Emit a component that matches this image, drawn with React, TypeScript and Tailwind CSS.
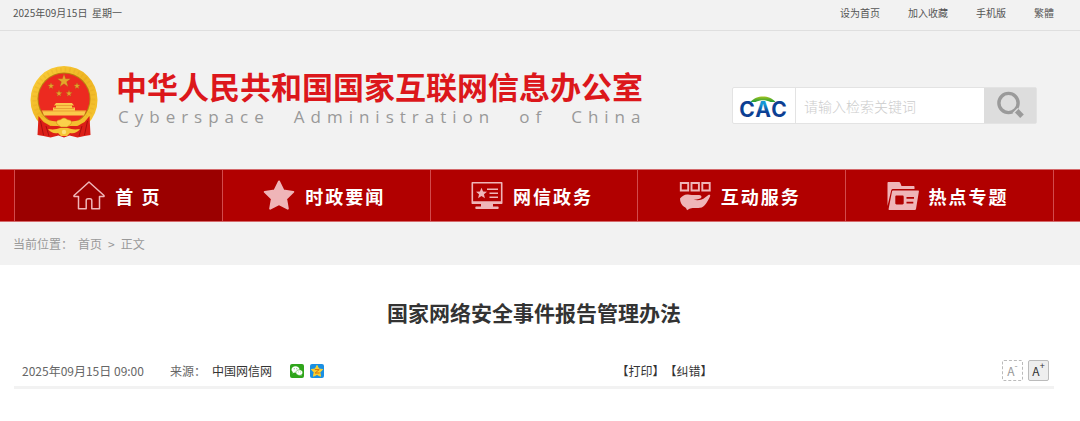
import type { ReactNode } from 'react';

function star(cx: number, cy: number, r: number, inner = 0.4) {
  return Array.from({ length: 10 }, (_, i) => {
    const radius = i % 2 ? r * inner : r;
    const angle = (Math.PI / 5) * i - Math.PI / 2;
    return `${cx + radius * Math.cos(angle)},${cy + radius * Math.sin(angle)}`;
  }).join(' ');
}

function Emblem() {
  return (
    <svg viewBox="0 0 68 73" className="mb-0.5 h-[73px] w-[68px] shrink-0" aria-hidden="true">
      <defs>
        <linearGradient id="gold" x1="0" y1="0" x2="1" y2="1">
          <stop offset="0" stopColor="#fbd23c" />
          <stop offset="0.5" stopColor="#efb524" />
          <stop offset="1" stopColor="#f7c832" />
        </linearGradient>
      </defs>
      <ellipse cx="34" cy="35" rx="33.5" ry="34" fill="url(#gold)" />
      <circle
        cx="34"
        cy="34"
        r="29.5"
        fill="none"
        stroke="#d9981a"
        strokeWidth="4"
        strokeDasharray="1.5 3"
        opacity="0.2"
      />
      <circle cx="34" cy="34" r="26.5" fill="#b98210" />
      <circle cx="34" cy="34" r="25.5" fill="#ec2a20" />
      <g fill="#e5a52a" stroke="#a8541a" strokeWidth="0.3">
        <polygon points={star(34, 16, 7)} />
        <polygon points={star(21, 21, 3.5)} />
        <polygon points={star(47, 21, 3.5)} />
        <polygon points={star(29, 28.5, 3.5)} />
        <polygon points={star(39, 28.5, 3.5)} />
      </g>
      <path
        d="M26 38h16l2 2.5H24zM26 40.5h16V43H26zM23 42.5h22v3H23zM12 45.5h44l-2 5H14z"
        fill="#fbc94a"
      />
      <path d="M25 40.5h18M24 43.5h20M13 46h42" stroke="#d9781f" strokeWidth="0.5" />
      <path d="M8.5 51l5 6 7 4h27l7-4 5-6 1 19-6 1-7 1.5-8-2-5.5 2-5.5-2-8 2-7-1.5-6-1z" fill="#dc1f17" />
      <path d="M10.5 56l3 14M57.5 56l-3 14M16 61l3 10M52 61l-3 10" stroke="#a80f0f" strokeWidth="1" />
      <path d="M9 50c6 5 14 7 25 7s19-2 25-7c-4 8-12 11.5-25 11.5S13 58 9 50z" fill="#f3bd30" />
      <path
        d="M34 53c2 0 3 2 5 2s3 2 2 4l-4 3h-6l-4-3c-1-2 0-4 2-4s3-2 5-2z"
        fill="#fbd04a"
        stroke="#cf8d14"
        strokeWidth="0.6"
      />
      <path
        d="M18 64c6 1 9 0 12-1h8c3 1 6 2 12 1-2 3-6 5-10 4l-3 3h-6l-3-3c-4 1-8-1-10-4z"
        fill="#f6c436"
      />
      <circle cx="34" cy="67" r="2.2" fill="#fde07a" />
    </svg>
  );
}

function CacLogo() {
  return (
    <svg viewBox="0 0 50 35" className="h-[35px] w-[50px]" role="img" aria-label="CAC">
      <defs>
        <linearGradient id="arc" x1="0" y1="0" x2="0" y2="1">
          <stop offset="0" stopColor="#a6c41f" />
          <stop offset="1" stopColor="#1d9b38" />
        </linearGradient>
        <linearGradient id="letter" x1="0" y1="0" x2="0" y2="1">
          <stop offset="0.3" stopColor="#1497d5" />
          <stop offset="0.6" stopColor="#0c3f93" />
        </linearGradient>
      </defs>
      <path d="M11.5 14C15 10 19 8.500 24 8.500s9 1.500 12.500 5.500h-5c-5-2.500-10-2.500-15 0z" fill="url(#arc)" />
      <g fontFamily="Inter, 'Liberation Sans', sans-serif" fontSize="21" fontWeight="700" textAnchor="middle">
        <text x="8" y="29" fill="#0c3f93">C</text>
        <text x="24" y="29" fill="url(#letter)">A</text>
        <text x="40" y="29" fill="#0c3f93">C</text>
      </g>
    </svg>
  );
}

function SearchIcon() {
  return (
    <svg viewBox="0 0 28 28" className="size-7" fill="none" stroke="#9a9a9a" aria-hidden="true">
      <circle cx="12.5" cy="12" r="9.6" strokeWidth="3.4" />
      <path d="M20.5 19.5l5.5 5.7" strokeWidth="5" />
      <path d="M17 22.5l5-5" stroke="#ddd" strokeWidth="1.5" />
    </svg>
  );
}

function NavIcon({ children }: { children: ReactNode }) {
  return (
    <svg viewBox="0 0 32 32" className="mb-0.5 size-8 shrink-0" fill="#efb5b8" aria-hidden="true">
      {children}
    </svg>
  );
}

const navItems = [
  {
    label: '首 页',
    active: true,
    icon: (
      <path
        d="M16 3L1 16.5v1h4.500v12.200h7.700v-8c0-1.300.6-1.900 1.800-1.900h2c1.200 0 1.800.6 1.800 1.900v8h7.700V17.500H31v-1z"
        fill="none"
        stroke="#efb5b8"
        strokeWidth="1.5"
        strokeLinejoin="round"
      />
    ),
  },
  {
    label: '时政要闻',
    icon: (
      <polygon
        points={star(16, 17.5, 15, 0.5)}
        stroke="#efb5b8"
        strokeWidth="2"
        strokeLinejoin="round"
      />
    ),
  },
  {
    label: '网信政务',
    icon: (
      <>
        <path
          fillRule="evenodd"
          d="M1.5 3h29c.6 0 1 .4 1 1v20c0 .6-.4 1-1 1H22v2.5h4.500c.8 0 1.200.4 1.200 1.200s-.4 1.300-1.200 1.300h-21c-.8 0-1.200-.5-1.200-1.300s.4-1.200 1.200-1.200H10V25H1.500c-.6 0-1-.4-1-1V4c0-.6.4-1 1-1zm.6 1.600v17.700h27.800V4.600z"
        />
        <polygon points={star(10.5, 14.5, 5.8, 0.45)} />
        <path d="M16 10.2h11M18.5 14.2H27M18.5 18.2H27" stroke="#efb5b8" strokeWidth="1.6" />
      </>
    ),
  },
  {
    label: '互动服务',
    icon: (
      <>
        <path
          d="M1.800 4h7.400v7.500H1.800zM12.500 4h7.400v7.500h-7.400zM23.300 4h7.400v7.500h-7.400z"
          fill="none"
          stroke="#efb5b8"
          strokeWidth="1.9"
        />
        <path d="M1 19.500c2-2.500 5-4.500 8-4 3 .6 7 .5 11 .5 2.200 0 3 1.600 2.200 2.800-.9 1.200-3.200 1.500-7.700 2 4.500 1 9.200.2 11.200-2L29 16.200c1.500-1 2.800-.4 2 1.200-2.500 5-5 10.600-10 11.400-3.500.7-8-.5-10.500 1L8 31.200c-.5-2-1.500-2.700-3-3.500-2.500-1.500-4-4.700-4-8.200z" />
      </>
    ),
  },
  {
    label: '热点专题',
    icon: (
      <>
        <path d="M.5 27V4c0-.6.4-1 1-1H12c.6 0 1 .3 1.200.8L14.500 7H26.500c.6 0 1 .4 1 1v2H6.200c-1.200 0-1.800.5-2 1.500z" />
        <path
          fillRule="evenodd"
          d="M6 11.500h25c.7 0 1 .4.900 1l-2.900 17.500c-.1.600-.5 1-1.200 1H2.500c-.7 0-1-.4-.9-1L5 12.500c.1-.6.4-1 1-1zm3.500 5c-.7 0-1.200.5-1.200 1.200v6.600c0 .7.5 1.200 1.200 1.200h6c.7 0 1.200-.5 1.200-1.200v-6.600c0-.7-.5-1.200-1.200-1.200zM19.500 18v1.800H27V18zM19.500 22.800v1.800h6.800v-1.800z"
        />
      </>
    ),
  },
];

function WechatIcon() {
  return (
    <svg viewBox="0 0 14 14" className="size-3.5" aria-hidden="true">
      <rect width="14" height="14" rx="2" fill="#2fa51b" />
      <path d="M5.5 2.300C3.300 2.300 1.500 3.700 1.500 5.600c0 1 .5 1.900 1.400 2.500l-.4 1.300 1.600-.8c.5.1.9.2 1.400.2 2.200 0 4-1.400 4-3.200S7.700 2.300 5.500 2.300z" fill="#fff" />
      <path
        d="M9.300 5.800c-1.900 0-3.400 1.200-3.400 2.800s1.500 2.800 3.400 2.800l1.200-.2 1.400.7-.4-1.100c.8-.5 1.200-1.300 1.200-2.200 0-1.600-1.500-2.800-3.400-2.800z"
        fill="#fff"
        stroke="#2fa51b"
        strokeWidth="0.5"
      />
      <g fill="#2fa51b">
        <circle cx="4.2" cy="4.8" r="0.5" />
        <circle cx="6.8" cy="4.8" r="0.5" />
        <circle cx="8.2" cy="7.9" r="0.4" />
        <circle cx="10.4" cy="7.9" r="0.4" />
      </g>
    </svg>
  );
}

function QzoneIcon() {
  return (
    <svg viewBox="0 0 14 14" className="size-3.5" aria-hidden="true">
      <rect width="14" height="14" rx="2" fill="#1a8fe3" />
      <polygon points={star(7, 7.4, 6, 0.5)} fill="#fdd02c" stroke="#fdd02c" strokeWidth="1" strokeLinejoin="round" />
      <path d="M4.8 5.6h4.400L5.200 9h4.400" fill="none" stroke="#d5710c" strokeWidth="1" />
    </svg>
  );
}

export default function App() {
  return (
    <div className="bg-white font-['Noto_Sans_CJK_SC','Noto_Sans',sans-serif] text-xs text-[#333]">
      <div className="flex h-[31px] items-center justify-between border-b border-[#dfdfdf] bg-[#f2f2f2] pr-6.5 pb-1 pl-[13px] text-[10px] text-[#555]">
        <span>2025年09月15日&nbsp; 星期一</span>
        <nav className="flex gap-7">
          <a href="#home">设为首页</a>
          <a href="#favorite">加入收藏</a>
          <a href="#mobile">手机版</a>
          <a href="#traditional">繁體</a>
        </nav>
      </div>

      <header className="flex h-[138px] items-center justify-between bg-[#f2f2f2] pr-[43px] pl-[30px]">
        <div className="flex items-center gap-[18px] pt-1">
          <Emblem />
          <div className="pb-2 whitespace-nowrap">
            <h1 className="text-[31px] leading-[38px] font-bold text-[#dc171b]">
              中华人民共和国国家互联网信息办公室
            </h1>
            <p className="flex gap-6 pl-0.5 font-['Open_Sans','Noto_Sans',sans-serif] text-[17px] leading-6 tracking-[6px] text-[#999]">
              <span>Cyberspace</span>
              <span>Administration</span>
              <span>of</span>
              <span>China</span>
            </p>
          </div>
        </div>
        <form className="mt-2.5 flex h-[37px] w-[305px] rounded-xs border border-[#e3e3e3] bg-white">
          <div className="flex w-[63px] items-center border-r border-[#e3e3e3] pl-1.5">
            <CacLogo />
          </div>
          <input
            type="text"
            aria-label="检索关键词"
            placeholder="请输入检索关键词"
            className="min-w-0 flex-1 px-2 pt-0.5 text-sm font-light outline-none placeholder:text-[#ccc]"
          />
          <button type="submit" aria-label="搜索" className="flex w-[52px] items-center justify-center bg-[#ddd]">
            <SearchIcon />
          </button>
        </form>
      </header>

      <nav className="border-y border-[#d4696b] bg-[#b10000] pr-6.5 pl-3.5">
        <div className="grid h-[51px] grid-cols-5 border-l border-[#d24a4c]">
          {navItems.map((item) => (
            <a
              key={item.label}
              href="#channel"
              className={`flex items-center justify-center gap-2.5 border-r border-[#d24a4c] text-lg font-bold tracking-[2px] text-white ${
                item.active ? 'bg-[#9b0000] pr-0.5' : 'pr-1'
              }`}
            >
              <NavIcon>{item.icon}</NavIcon>
              {item.label}
            </a>
          ))}
        </div>
      </nav>

      <div className="flex h-[43px] items-center bg-[#f2f2f2] pl-[13px] text-[#999]">
        <span className="mr-[5px]">当前位置：</span>
        <a href="#home">首页</a>
        <span className="mx-1.5">&gt;</span>
        <span>正文</span>
      </div>

      <main className="mr-6.5 ml-3.5 pt-[31px]">
        <h2 className="text-center text-[21px] leading-8 font-bold">国家网络安全事件报告管理办法</h2>
        <div className="mt-8 grid grid-cols-[11fr_6fr_2fr] items-center border-b-3 border-[#f2f2f2] pr-[5px] pb-[5px] pl-2">
          <div className="flex items-center text-[#666]">
            <span>2025年09月15日 09:00</span>
            <span className="mr-1.5 ml-6.5">来源：</span>
            <a href="#source" className="text-[#333]">
              中国网信网
            </a>
            <div className="ml-4.5 flex gap-1.5">
              <a href="#wechat" aria-label="分享到微信">
                <WechatIcon />
              </a>
              <a href="#qzone" aria-label="分享到QQ空间">
                <QzoneIcon />
              </a>
            </div>
          </div>
          <div className="flex">
            <button type="button">【打印】</button>
            <button type="button">【纠错】</button>
          </div>
          <div className="flex justify-end gap-[5px]">
            <button
              type="button"
              aria-label="缩小字号"
              className="flex size-[21px] items-center justify-center rounded-xs border border-dashed border-[#bbb] text-[#999]"
            >
              A<sup>-</sup>
            </button>
            <button
              type="button"
              aria-label="放大字号"
              className="flex size-[21px] items-center justify-center rounded-xs border border-[#bbb] bg-[#eee] text-[#333]"
            >
              A<sup>+</sup>
            </button>
          </div>
        </div>
      </main>
    </div>
  );
}
